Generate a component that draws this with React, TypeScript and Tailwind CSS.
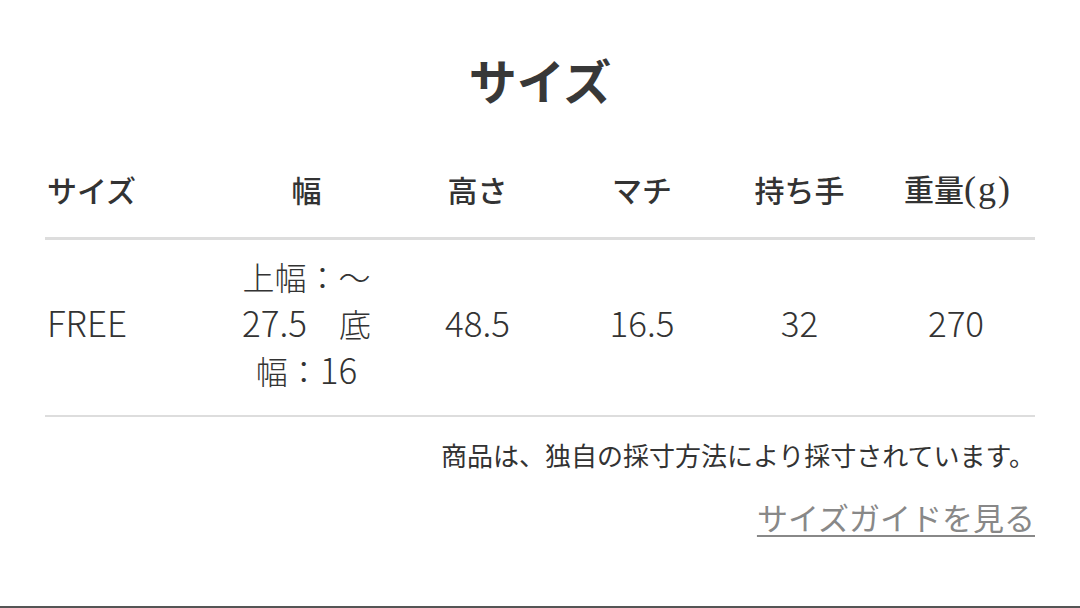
const cols = "grid grid-cols-[175px_173px_169px_160px_155px_158px]";

const headers = ["幅", "高さ", "マチ", "持ち手"];
const values = ["48.5", "16.5", "32", "270"];

const Num = ({ children }: { children: React.ReactNode }) => (
  <span className="text-[35px]">{children}</span>
);

export default function App() {
  return (
    <div
      className="h-[608px] w-[1080px] bg-white border-b-2 border-[#555] px-[45px] text-[#333]"
      style={{ fontFamily: '"Noto Sans CJK JP", "Noto Sans", sans-serif' }}
    >
      <div className="h-[158px] flex items-center justify-center">
        <h1 className="text-[48px] leading-none font-bold text-[#383838]">サイズ</h1>
      </div>

      <div className={`${cols} h-[82px] items-center pb-[17px] border-b-[3px] border-[#ddd] text-[30px] font-medium`}>
        <div className="pl-[2px]">サイズ</div>
        {headers.map((h) => (
          <div key={h} className="text-center">
            {h}
          </div>
        ))}
        <div className="text-center pl-[4px]">
          重量
          <span style={{ fontFamily: '"Liberation Serif", serif' }} className="text-[36px] font-normal tracking-[2px]">
            (g)
          </span>
        </div>
      </div>

      <div className={`${cols} h-[177px] items-center pb-[10px] border-b-2 border-[#ddd] text-[32px] font-light leading-[46px]`}>
        <div className="pl-[2px]">
          <Num>FREE</Num>
        </div>
        <div className="text-center">
          上幅：～
          <br />
          <Num>27.5</Num>　底
          <br />
          幅：<Num>16</Num>
        </div>
        {values.map((v) => (
          <div key={v} className="text-center">
            <Num>{v}</Num>
          </div>
        ))}
      </div>

      <p className="mt-[20px] text-right text-[26px] leading-[36px]">
        商品は、独自の採寸方法により採寸されています。
      </p>

      <div className="mt-[26px] text-right">
        <a className="text-[31px] leading-[36px] text-[#888] underline decoration-2 underline-offset-[5px]">
          サイズガイドを見る
        </a>
      </div>
    </div>
  );
}
